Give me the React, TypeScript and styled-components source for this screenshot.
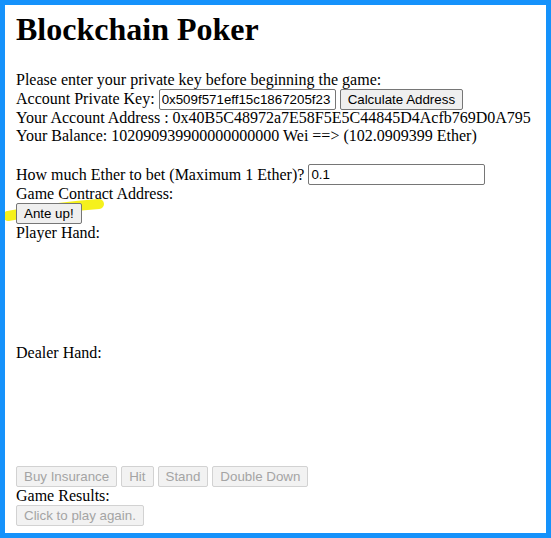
import React from "react";
import styled, { createGlobalStyle } from "styled-components";

const Global = createGlobalStyle`
  html, body { margin: 0; padding: 0; background: #ffffff; }
  body { font-family: "Liberation Serif", "Times New Roman", serif; font-size: 16px; color: #000; }
`;

const Frame = styled.div`
  position: relative;
  box-sizing: border-box;
  width: 551px;
  height: 538px;
  border: 5px solid #1592fb;
  padding: 6px 0 0 11px;
  background: #fff;
  overflow: hidden;
`;

const Title = styled.h1`
  margin: 0 0 23px 0;
  font-size: 32px;
  font-weight: bold;
  line-height: 37px;
`;

const Para = styled.div<{ $gap?: number }>`
  margin: 0 0 ${(p) => p.$gap ?? 0}px 0;
  line-height: 18.4px;
`;

const Line = styled.div`
  display: flex;
  align-items: center;
  gap: 4px;
  min-height: 18.4px;
  white-space: nowrap;
`;

const InputLine = styled(Line)<{ $h: number }>`
  height: ${(p) => p.$h}px;
`;

const Field = styled.input`
  box-sizing: border-box;
  width: 177px;
  height: 21px;
  margin: 0;
  padding: 1px 2px;
  border: 1px solid #767676;
  border-radius: 2px;
  font-family: "Liberation Sans", Arial, sans-serif;
  font-size: 13.33px;
  color: #000;
  background: #fff;
  outline: none;
`;

const Btn = styled.button`
  position: relative;
  z-index: 1;
  box-sizing: border-box;
  height: 21px;
  padding: 1px 7px;
  margin: 0;
  border: 1px solid #767676;
  border-radius: 2px;
  background: #efefef;
  color: #000;
  font-family: "Liberation Sans", Arial, sans-serif;
  font-size: 13.33px;
  line-height: 15px;
  cursor: default;
  &:disabled {
    color: #a4a4a4;
    border-color: #d2d2d2;
    background: #f2f2f2;
  }
`;

const ButtonLine = styled(Line)`
  height: 21px;
`;

const CardArea = styled.div<{ $h: number }>`
  height: ${(p) => p.$h}px;
`;

const Highlight = styled.svg`
  position: absolute;
  left: 0;
  top: 185px;
  width: 110px;
  height: 40px;
  z-index: 0;
  pointer-events: none;
`;

export default function App() {
  return (
    <>
      <Global />
      <Frame>
        <Title>Blockchain Poker</Title>
        <Para $gap={19}>
          <Line>Please enter your private key before beginning the game:</Line>
          <InputLine $h={19.5}>
            <span>Account Private Key:</span>
            <Field defaultValue="0x509f571eff15c1867205f23" />
            <Btn>Calculate Address</Btn>
          </InputLine>
          <Line>Your Account Address : 0x40B5C48972a7E58F5E5C44845D4Acfb769D0A795</Line>
          <Line>Your Balance: 102090939900000000000 Wei ==&gt; (102.0909399 Ether)</Line>
        </Para>
        <Para>
          <InputLine $h={20}>
            <span>How much Ether to bet (Maximum 1 Ether)?</span>
            <Field defaultValue="0.1" />
          </InputLine>
          <Line>Game Contract Address:</Line>
          <ButtonLine>
            <Btn>Ante up!</Btn>
          </ButtonLine>
          <Line>Player Hand:</Line>
          <CardArea $h={101} />
          <Line>Dealer Hand:</Line>
          <CardArea $h={104} />
          <ButtonLine>
            <Btn disabled>Buy Insurance</Btn>
            <Btn disabled>Hit</Btn>
            <Btn disabled>Stand</Btn>
            <Btn disabled>Double Down</Btn>
          </ButtonLine>
          <Line>Game Results:</Line>
          <ButtonLine>
            <Btn disabled>Click to play again.</Btn>
          </ButtonLine>
        </Para>
        <Highlight viewBox="0 0 110 40">
          <path
            d="M3 26 C 30 21, 62 16, 94 14"
            stroke="#f5f11c"
            strokeWidth="10"
            strokeLinecap="round"
            fill="none"
          />
        </Highlight>
      </Frame>
    </>
  );
}
